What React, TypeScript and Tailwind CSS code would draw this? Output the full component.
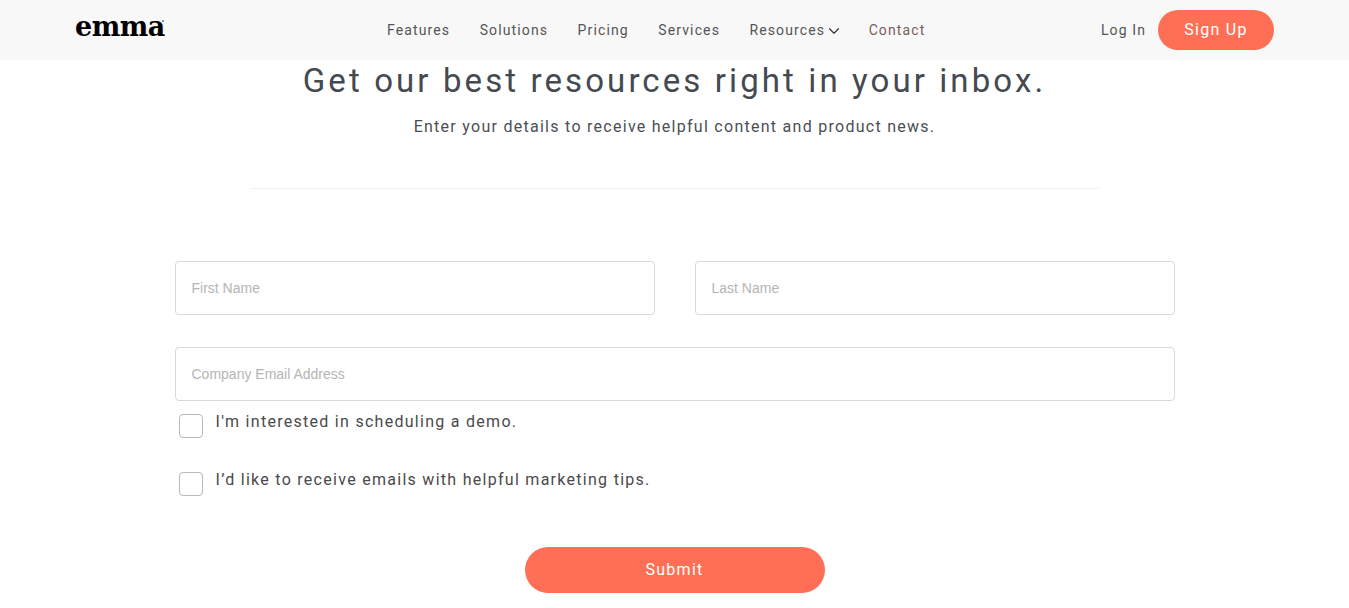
import React from 'react';
import { ChevronDown } from 'lucide-react';

const navItems = ['Features', 'Solutions', 'Pricing', 'Services'];

function Header() {
  return (
    <header className="h-[60px] bg-[#f8f8f8] flex items-center pl-[75px] pr-[75px] font-['Roboto',sans-serif]">
      <div className="w-[312px] relative -top-[2px]">
        <span className="font-['DejaVu_Serif',serif] font-bold text-[27px] leading-none tracking-[-0.5px] text-black">
          emma
        </span>
        <span className="absolute left-[87px] top-[7px] w-[2px] h-[2px] rounded-full bg-[#777777]" />
      </div>
      <nav className="flex items-center gap-[29.5px] text-[14px] tracking-[1.12px] text-[#555555]">
        {navItems.map((item) => (
          <a key={item}>{item}</a>
        ))}
        <a className="flex items-center">
          Resources
          <ChevronDown size={18} strokeWidth={1.5} className="text-[#333333] mt-[2px] -mr-[4px]" />
        </a>
        <a className="text-[#7a5c58]">Contact</a>
      </nav>
      <div className="ml-auto flex items-center gap-[12px]">
        <a className="text-[14px] tracking-[1.12px] text-[#555555]">Log In</a>
        <button className="w-[116px] h-[40px] rounded-full bg-[#ff6f55] text-white text-[16px] tracking-[1.28px]">
          Sign Up
        </button>
      </div>
    </header>
  );
}

function TextField({ placeholder }: { placeholder: string }) {
  return (
    <input
      type="text"
      placeholder={placeholder}
      className="w-full h-[54px] border border-[#d9d9d9] rounded-[4px] px-[16px] text-[14px] font-['Liberation_Sans',sans-serif] bg-white placeholder:text-[#b5b5b5]"
    />
  );
}

function CheckRow({ label, className }: { label: string; className?: string }) {
  return (
    <label className={`flex items-start pl-[4px] ${className ?? ''}`}>
      <span className="w-[24px] h-[24px] mt-[13px] border border-[#b8b8b8] rounded-[4px] bg-white shrink-0" />
      <span className="ml-[13px] mt-[10px] text-[16px] leading-[22px] tracking-[1.28px] text-[#4a4a4a]">{label}</span>
    </label>
  );
}

export default function App() {
  return (
    <div className="h-[608px] overflow-hidden bg-white font-['Roboto',sans-serif]">
      <Header />
      <main>
        <div className="text-center">
          <h1 className="text-[33px] leading-[42px] tracking-[3.1px] text-[#444a50]">
            Get our best resources right in your inbox.
          </h1>
          <p className="mt-[14px] text-[16px] leading-[22px] tracking-[1.27px] text-[#4a4f55]">
            Enter your details to receive helpful content and product news.
          </p>
        </div>
        <div className="w-[850px] h-px bg-[#f3f3f3] mx-auto mt-[50px]" />
        <form className="w-[1000px] mx-auto mt-[72px]">
          <div className="grid grid-cols-2 gap-x-[40px]">
            <TextField placeholder="First Name" />
            <TextField placeholder="Last Name" />
          </div>
          <div className="mt-[32px]">
            <TextField placeholder="Company Email Address" />
          </div>
          <CheckRow label="I'm interested in scheduling a demo." />
          <CheckRow label="I’d like to receive emails with helpful marketing tips." className="mt-[21px]" />
          <div className="flex justify-center mt-[51px]">
            <button
              type="button"
              className="w-[300px] h-[46px] rounded-full bg-[#ff6f55] text-white text-[16px] tracking-[1.28px]"
            >
              Submit
            </button>
          </div>
        </form>
      </main>
    </div>
  );
}
